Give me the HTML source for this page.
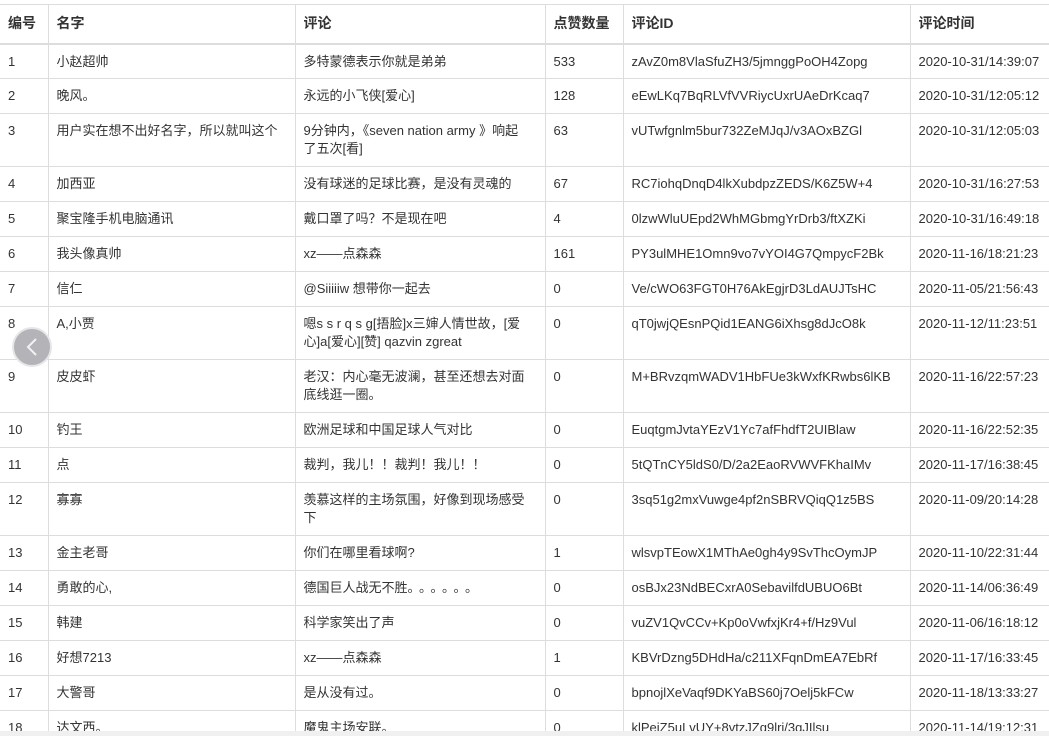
<!DOCTYPE html>
<html><head><meta charset="utf-8"><style>
html,body{margin:0;padding:0;background:#fff;overflow:hidden;width:1049px;height:736px}
body{font-family:"Liberation Sans","Noto Sans CJK SC",sans-serif;font-size:13px;color:#333;position:relative}
table{position:absolute;top:4px;left:0;border-collapse:collapse;table-layout:fixed;width:1049px}
td,th{border:1px solid #ddd;padding:8px 8px 0 8px;vertical-align:top;text-align:left;line-height:18px;overflow:hidden;white-space:nowrap}
td.w{white-space:normal}
tr{height:35px}
tr.d{height:53px}
th{font-weight:bold;font-size:14px;border-bottom:2px solid #ddd;height:39px;box-sizing:border-box;padding-top:9px;color:#333}
tr>*:first-child{border-left:none}
tr>*:last-child{border-right:none}
.nav{position:absolute;left:12px;top:327px;width:40px;height:40px;border-radius:50%;background:#b4b4b8;border:2px solid #e6e6e8;box-sizing:border-box}
.bar{position:absolute;left:0;top:731px;width:1049px;height:5px;background:#f0f0f0}
</style></head><body>
<table>
<colgroup><col style="width:48px"><col style="width:247px"><col style="width:250px"><col style="width:78px"><col style="width:287px"><col style="width:139px"></colgroup>
<tr style="height:39px"><th>编号</th><th>名字</th><th>评论</th><th>点赞数量</th><th>评论ID</th><th>评论时间</th></tr>
<tr><td>1</td><td>小赵超帅</td><td>多特蒙德表示你就是弟弟</td><td>533</td><td>zAvZ0m8VlaSfuZH3/5jmnggPoOH4Zopg</td><td>2020-10-31/14:39:07</td></tr>
<tr><td>2</td><td>晚风。</td><td>永远的小飞侠[爱心]</td><td>128</td><td>eEwLKq7BqRLVfVVRiycUxrUAeDrKcaq7</td><td>2020-10-31/12:05:12</td></tr>
<tr class="d"><td>3</td><td>用户实在想不出好名字，所以就叫这个</td><td>9分钟内，《seven nation army 》响起<br>了五次[看]</td><td>63</td><td>vUTwfgnlm5bur732ZeMJqJ/v3AOxBZGl</td><td>2020-10-31/12:05:03</td></tr>
<tr><td>4</td><td>加西亚</td><td>没有球迷的足球比赛，是没有灵魂的</td><td>67</td><td>RC7iohqDnqD4lkXubdpzZEDS/K6Z5W+4</td><td>2020-10-31/16:27:53</td></tr>
<tr><td>5</td><td>聚宝隆手机电脑通讯</td><td>戴口罩了吗？不是现在吧</td><td>4</td><td>0lzwWluUEpd2WhMGbmgYrDrb3/ftXZKi</td><td>2020-10-31/16:49:18</td></tr>
<tr><td>6</td><td>我头像真帅</td><td>xz——点森森</td><td>161</td><td>PY3ulMHE1Omn9vo7vYOI4G7QmpycF2Bk</td><td>2020-11-16/18:21:23</td></tr>
<tr><td>7</td><td>信仁</td><td>@Siiiiiw 想带你一起去</td><td>0</td><td>Ve/cWO63FGT0H76AkEgjrD3LdAUJTsHC</td><td>2020-11-05/21:56:43</td></tr>
<tr class="d"><td>8</td><td>A,小贾</td><td class="w">嗯s s r q s g[捂脸]x三婶人情世故，[爱心]a[爱心][赞] qazvin zgreat</td><td>0</td><td>qT0jwjQEsnPQid1EANG6iXhsg8dJcO8k</td><td>2020-11-12/11:23:51</td></tr>
<tr class="d"><td>9</td><td>皮皮虾</td><td class="w">老汉：内心毫无波澜，甚至还想去对面底线逛一圈。</td><td>0</td><td>M+BRvzqmWADV1HbFUe3kWxfKRwbs6lKB</td><td>2020-11-16/22:57:23</td></tr>
<tr><td>10</td><td>钓王</td><td>欧洲足球和中国足球人气对比</td><td>0</td><td>EuqtgmJvtaYEzV1Yc7afFhdfT2UIBlaw</td><td>2020-11-16/22:52:35</td></tr>
<tr><td>11</td><td>点</td><td>裁判，我儿！！裁判！我儿！！</td><td>0</td><td>5tQTnCY5ldS0/D/2a2EaoRVWVFKhaIMv</td><td>2020-11-17/16:38:45</td></tr>
<tr class="d"><td>12</td><td>寡寡</td><td class="w">羡慕这样的主场氛围，好像到现场感受下</td><td>0</td><td>3sq51g2mxVuwge4pf2nSBRVQiqQ1z5BS</td><td>2020-11-09/20:14:28</td></tr>
<tr><td>13</td><td>金主老哥</td><td>你们在哪里看球啊?</td><td>1</td><td>wlsvpTEowX1MThAe0gh4y9SvThcOymJP</td><td>2020-11-10/22:31:44</td></tr>
<tr><td>14</td><td>勇敢的心,</td><td>德国巨人战无不胜<span style="letter-spacing:5px">。。。。。。</span></td><td>0</td><td>osBJx23NdBECxrA0SebavilfdUBUO6Bt</td><td>2020-11-14/06:36:49</td></tr>
<tr><td>15</td><td>韩建</td><td>科学家笑出了声</td><td>0</td><td>vuZV1QvCCv+Kp0oVwfxjKr4+f/Hz9Vul</td><td>2020-11-06/16:18:12</td></tr>
<tr><td>16</td><td>好想7213</td><td>xz——点森森</td><td>1</td><td>KBVrDzng5DHdHa/c211XFqnDmEA7EbRf</td><td>2020-11-17/16:33:45</td></tr>
<tr><td>17</td><td>大警哥</td><td>是从没有过。</td><td>0</td><td>bpnojlXeVaqf9DKYaBS60j7Oelj5kFCw</td><td>2020-11-18/13:33:27</td></tr>
<tr><td>18</td><td>达文西。</td><td>魔鬼主场安联。</td><td>0</td><td>klPeiZ5uLvUY+8vtzJZg9lri/3gJIlsu</td><td>2020-11-14/19:12:31</td></tr>
</table>
<div class="nav"><svg width="36" height="36" viewBox="0 0 36 36" style="position:absolute;left:0;top:0"><path d="M22 10 L14 18 L22 26" fill="none" stroke="#f2f2f2" stroke-width="2"/></svg></div>
<div class="bar"></div>
</body></html>
